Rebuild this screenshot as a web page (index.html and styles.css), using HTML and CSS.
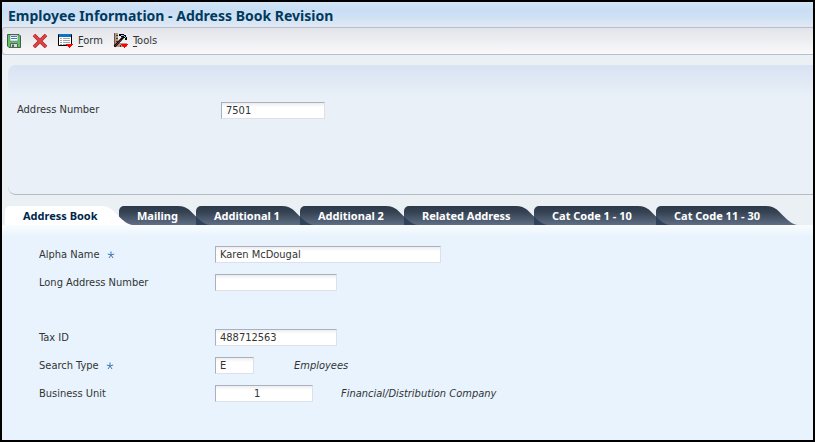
FILE: index.html
```html
<!DOCTYPE html>
<html lang="en">
<head>
<meta charset="utf-8">
<title>Employee Information - Address Book Revision</title>
<link rel="stylesheet" href="styles.css">
</head>
<body>
<svg class="defs" aria-hidden="true">
  <defs>
    <linearGradient id="tab-fill" x1="0" y1="0" x2="0" y2="1">
      <stop offset="0" stop-color="#2c3949"/>
      <stop offset="0.3" stop-color="#344152"/>
      <stop offset="1" stop-color="#606e84"/>
    </linearGradient>
    <symbol id="tail" viewBox="0 0 32 19"><path d="M0 0C10 0 13 6 18 10.500C23 15 26 18.500 32 19H0Z"/></symbol>
    <symbol id="tail-shade" viewBox="0 0 32 19"><path d="M18 10.500C23 15 26 18.500 32 19H18Z"/></symbol>
  </defs>
</svg>
<header class="title-bar"><h1>Employee Information - Address Book Revision</h1></header>
<nav class="toolbar" aria-label="Form actions">
  <button class="tool" type="button" aria-label="Save">
    <svg width="14" height="14" viewBox="0 0 14 14">
      <path d="M.5.500H12L13.500 2V13.500H2L.5 12Z" fill="#5dc35d" stroke="#3f5c4c"/>
      <path d="M3 1H11V7H3Z" fill="#fff" stroke="#5c7480" stroke-width=".6"/>
      <path d="M4 2.500H10M4 4.500H10" stroke="#5573c4"/>
      <path d="M3.500 9.500H10.500V13.500H3.500Z" fill="#d4dcd8" stroke="#56665c"/>
      <path d="M5 10.500H7V13H5Z" fill="#4c6456"/>
    </svg>
  </button>
  <button class="tool cancel" type="button" aria-label="Cancel">
    <svg width="16" height="14" viewBox="0 0 16 14">
      <path d="M2 1L14 13M14 1L2 13" stroke="#a92c2c" stroke-width="3.600"/>
      <path d="M2 1L14 13M14 1L2 13" stroke="#df4343" stroke-width="2.200"/>
    </svg>
  </button>
  <button class="tool" type="button">
    <svg width="16" height="16" viewBox="0 0 16 16">
      <path d="M.5 1.500H13.500V12.500H.5Z" fill="#fff" stroke="#000"/>
      <path d="M1 1H13V4H1Z" fill="#0a74c4"/>
      <path d="M2 5.500H4M2 7.500H4M2 9.500H4M2 11.500H4M5 5.500H12M5 7.500H12M5 9.500H12M5 11.500H8" stroke="#a4a4a4"/>
      <path d="M8 11H15V12H14V13H13V14H12V15H11V14H10V13H9V12H8Z" fill="#f00"/>
    </svg>
    <span><u>F</u>orm</span>
  </button>
  <button class="tool" type="button">
    <svg width="16" height="16" viewBox="0 0 16 16">
      <path d="M1 0H5V10H14V14H1Z" fill="#b09686"/>
      <path d="M1.500 0V14" stroke="#6b5548"/>
      <path d="M3 2.500H5M3 5.500H5M3 8.500H5M7.500 12V14M10.500 12V14" stroke="#4c3a30"/>
      <path d="M1.500 13.500L10 4.500" stroke="#000" stroke-width="2.400"/>
      <path d="M2 13L8 6.700" stroke="#b01c24" stroke-width="1"/>
      <path d="M6 1H11V2H13V4H14V7H12V5H10V4H8V3H6Z" fill="#000"/>
      <path d="M8 2.500H10.500L13 5" fill="none" stroke="#9fd6ec"/>
      <path d="M8 11H15V12H14V13H13V14H12V15H11V14H10V13H9V12H8Z" fill="#f00"/>
    </svg>
    <span><u>T</u>ools</span>
  </button>
</nav>
<main>
  <section class="key-panel">
    <label for="address-number">Address Number</label>
    <input id="address-number" class="field" type="text" value="7501">
  </section>
  <div class="tabs" role="tablist">
    <button class="tab active" type="button" role="tab" aria-selected="true">Address Book<svg class="tail" aria-hidden="true"><use href="#tail"/></svg></button>
    <button class="tab" type="button" role="tab">Mailing<svg class="tail" aria-hidden="true"><use href="#tail"/><use class="shade" href="#tail-shade"/></svg></button>
    <button class="tab" type="button" role="tab">Additional 1<svg class="tail" aria-hidden="true"><use href="#tail"/><use class="shade" href="#tail-shade"/></svg></button>
    <button class="tab" type="button" role="tab">Additional 2<svg class="tail" aria-hidden="true"><use href="#tail"/><use class="shade" href="#tail-shade"/></svg></button>
    <button class="tab" type="button" role="tab">Related Address<svg class="tail" aria-hidden="true"><use href="#tail"/><use class="shade" href="#tail-shade"/></svg></button>
    <button class="tab" type="button" role="tab">Cat Code 1 - 10<svg class="tail" aria-hidden="true"><use href="#tail"/><use class="shade" href="#tail-shade"/></svg></button>
    <button class="tab" type="button" role="tab">Cat Code 11 - 30<svg class="tail" aria-hidden="true"><use href="#tail"/></svg></button>
  </div>
  <form class="tab-panel">
    <div class="row">
      <label for="alpha">Alpha Name <svg class="req" viewBox="0 0 8 8"><path d="M4 .5V4L.8 3M4 4L7.200 3M4 4L2 7M4 4L6 7"/></svg></label>
      <input id="alpha" class="field wide" type="text" value="Karen McDougal" required>
    </div>
    <div class="row">
      <label for="long-number">Long Address Number</label>
      <input id="long-number" class="field medium" type="text">
    </div>
    <div class="row spaced">
      <label for="tax">Tax ID</label>
      <input id="tax" class="field medium" type="text" value="488712563">
    </div>
    <div class="row">
      <label for="search-type">Search Type <svg class="req" viewBox="0 0 8 8"><path d="M4 .5V4L.8 3M4 4L7.200 3M4 4L2 7M4 4L6 7"/></svg></label>
      <input id="search-type" class="field tiny" type="text" value="E" required>
      <em class="type-note">Employees</em>
    </div>
    <div class="row">
      <label for="unit">Business Unit</label>
      <input id="unit" class="field unit" type="text" value="1">
      <em class="unit-note">Financial/Distribution Company</em>
    </div>
  </form>
</main>
</body>
</html>
```
FILE: styles.css
```css
* { box-sizing: border-box; }

body {
  margin: 0;
  min-height: 100vh;
  display: flex;
  flex-direction: column;
  border: 2px solid #000;
  background: #ebf0f4;
  color: #333;
  font: 11px/14px "DejaVu Sans Condensed", "Noto Sans", sans-serif;
}

button, input { font: inherit; color: inherit; }
button { border: 0; padding: 0; background: none; cursor: pointer; }
.defs { position: absolute; width: 0; height: 0; }

.title-bar {
  height: 25px;
  padding: 0 6px;
  background: linear-gradient(#d3e5f6, #c9def4 30%, #cfe1f4 60%, #e2e9f3);
}

h1 {
  margin: 0;
  color: #003a5e;
  font: bold 14px/28px "Noto Sans", sans-serif;
}

.toolbar {
  display: flex;
  align-items: center;
  gap: 10px;
  height: 28px;
  padding: 0 4px;
  border: 1px solid #b7bfce;
  border-right: 0;
  border-radius: 3px 0 0 3px;
  background: linear-gradient(#e3e4e9, #f9f9fb);
}

.tool { display: flex; align-items: center; gap: 4px; line-height: 16px; }
.tool u { text-underline-offset: 2px; }
.cancel { margin-left: 1px; }

main { flex: 1; display: flex; flex-direction: column; }

.key-panel {
  display: flex;
  align-items: flex-start;
  height: 130px;
  margin: 10px 0 0 6px;
  padding: 37px 9px 0;
  border-bottom: 1px solid #b5bbc3;
  border-radius: 8px 0 0 8px;
  background: linear-gradient(#d9e2f2, #e9f0f8 32px);
}

.key-panel label { width: 204px; line-height: 16px; }

.field {
  width: 104px;
  height: 17px;
  padding: 0 4px;
  border: 1px solid #dde1e7;
  border-top-color: #a9b1bf;
  border-left-color: #a9b1bf;
  border-radius: 0;
  outline: 0;
  background: linear-gradient(#ededed, #fff 4px);
}

.wide { width: 226px; }
.medium { width: 122px; }
.tiny { width: 39px; }
.unit { width: 98px; padding-left: 38px; }

.tabs {
  display: grid;
  grid-template-columns: 114px 77px 104px 104px 130px 122px 128px;
  height: 19px;
  margin: 11px 0 0 3px;
}

.tab {
  position: relative;
  padding-left: 18px;
  border-radius: 5px 0 0 0;
  background: linear-gradient(#2c3949, #344152 30%, #606e84) no-repeat 0 0 / calc(100% - 18px) 100%;
  color: #fff;
  font: bold 11px/19px "Noto Sans", sans-serif;
  text-align: left;
  white-space: nowrap;
}

.tab.active { background-image: linear-gradient(#fff, #fff); color: #00264d; }

/* The slanted end of a tab runs over the start of the next one. */
.tail {
  position: absolute;
  z-index: 1;
  right: -14px;
  top: 0;
  width: 32px;
  height: 19px;
  fill: url(#tab-fill);
}

.active .tail { fill: #fff; }
.shade { fill: #243b56; opacity: 0.8; }

.tab-panel {
  flex: 1;
  padding: 21px 10px 10px 37px;
  background: linear-gradient(#fafdff, #e8f3fd 12px);
}

.row { display: flex; align-items: center; height: 17px; margin-bottom: 11px; }
.row.spaced { margin-top: 38px; }
.row label { width: 176px; flex: none; }
.req { width: 8px; height: 8px; margin-left: 4px; fill: none; stroke: #3b78b5; vertical-align: -1px; }
.type-note { margin-left: 40px; }
.unit-note { margin-left: 28px; }
```
